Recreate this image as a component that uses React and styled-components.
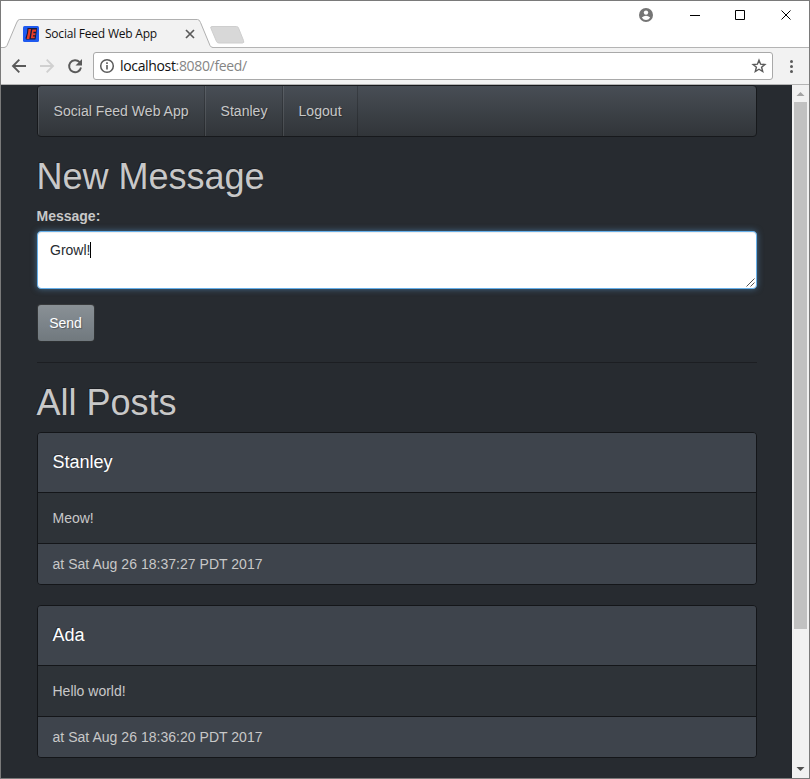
import React from "react";
import styled, { createGlobalStyle } from "styled-components";

const Global = createGlobalStyle`
  * { box-sizing: border-box; }
  html, body { margin: 0; padding: 0; overflow: hidden; }
`;

const Window = styled.div`
  width: 810px;
  height: 779px;
  display: flex;
  flex-direction: column;
  border: 1px solid #7a7a7a;
  background: #fff;
  overflow: hidden;
`;

const TitleBar = styled.div`
  position: relative;
  height: 47px;
  flex: none;
  display: flex;
  justify-content: space-between;
  border-bottom: 1px solid #b4b4b4;
`;

const TabShapes = styled.svg`
  position: absolute;
  left: 0;
  top: 0;
`;

const TabContent = styled.div`
  position: relative;
  display: flex;
  align-items: center;
  width: 196px;
  height: 28px;
  margin-top: 19px;
  padding-left: 22px;
`;

const TabTitle = styled.span`
  flex: none;
  width: 140px;
  margin-left: 6px;
  font: 12px/16px "Open Sans", "Noto Sans", sans-serif;
  letter-spacing: ${(p) => p.$tracking};
  color: #111;
  white-space: nowrap;
`;

const WindowControls = styled.svg`
  margin-right: 11px;
`;

const Toolbar = styled.div`
  height: 37px;
  flex: none;
  display: flex;
  align-items: center;
  background: #f2f2f2;
  border-bottom: 1px solid #b4b4b4;
`;

const NavIcons = styled.svg`
  flex: none;
`;

const AddressBar = styled.div`
  width: 680px;
  height: 28px;
  display: flex;
  align-items: center;
  padding: 0 5px;
  background: #fff;
  border: 1px solid #a9a9a9;
  border-radius: 3px;
`;

const Url = styled.span`
  flex: 1;
  margin-left: 5px;
  font: 14px/20px "Open Sans", "Noto Sans", sans-serif;
  letter-spacing: -0.34px;
  color: #858585;
  white-space: nowrap;
`;

const Host = styled.span`
  color: #111;
`;

const Viewport = styled.div`
  flex: 1;
  min-height: 0;
  display: flex;
`;

const Page = styled.main`
  flex: 1;
  padding: 0 35px 0 36px;
  overflow: hidden;
  background: #272b30;
  color: #c8c8c8;
  font: 14px/20px "Liberation Sans", Arial, sans-serif;
`;

const Navbar = styled.nav`
  display: flex;
  height: 52px;
  margin-bottom: 20px;
  border: 1px solid #17191c;
  border-radius: 4px;
  background: linear-gradient(#484e55, #3a3f44 60%, #313539);
  text-shadow: 1px 1px 1px rgba(0, 0, 0, 0.3);
  overflow: hidden;
`;

const NavItem = styled.a`
  width: ${(p) => p.$width}px;
  padding: 15px 0 0 14.5px;
  border-left: 1px solid rgba(255, 255, 255, 0.1);
  border-right: 1px solid rgba(0, 0, 0, 0.2);
  letter-spacing: 0.04px;
  white-space: nowrap;
`;

const Heading = styled.h1`
  margin: 0 0 9px -0.5px;
  font-size: 36px;
  font-weight: 400;
  line-height: 40px;
  text-shadow: -1px -1px 0 rgba(0, 0, 0, 0.3);
`;

const Label = styled.label`
  display: block;
  margin: 0 0 5px -0.5px;
  font-weight: 700;
`;

const MessageBox = styled.div`
  position: relative;
  height: 58px;
  padding: 8px 12px;
  background: #fff;
  color: #272b30;
  border: 1px solid #66afe9;
  border-radius: 4px;
  box-shadow: inset 0 1px 1px rgba(0, 0, 0, 0.075), 0 0 6px rgba(102, 175, 233, 0.5);
`;

const Caret = styled.span`
  display: inline-block;
  width: 1px;
  height: 16px;
  vertical-align: -3px;
  background: #000;
`;

const ResizeGrip = styled.svg`
  position: absolute;
  right: 1px;
  bottom: 1px;
`;

const SendButton = styled.button`
  display: block;
  width: 58px;
  height: 38px;
  margin: 15px 0 20px;
  padding: 0 1px 0 0;
  border: 1px solid rgba(0, 0, 0, 0.6);
  border-radius: 4px;
  background: linear-gradient(#8a9196, #7a8288 60%, #70787d);
  background-origin: border-box;
  color: #fff;
  font: inherit;
  text-shadow: 1px 1px 1px rgba(0, 0, 0, 0.3);
`;

const Divider = styled.hr`
  height: 1px;
  margin: 0 0 20px;
  border: 0;
  background: #1c1e22;
`;

const Panel = styled.article`
  height: 153px;
  margin-bottom: 20px;
  border: 1px solid #141619;
  border-radius: 4px;
  background: #2e3338;
  overflow: hidden;
`;

const PanelHeading = styled.h3`
  height: 60px;
  margin: 0;
  padding: 19px 14.5px 0;
  border-bottom: 1px solid #141619;
  background: #3e444c;
  color: #fff;
  font-size: 18px;
  font-weight: 400;
  line-height: 20px;
  text-shadow: -1px -1px 0 rgba(0, 0, 0, 0.3);
`;

const PanelBody = styled.div`
  height: 50px;
  padding: 15px 14.5px;
`;

const PanelFooter = styled.footer`
  height: 41px;
  padding: 10px 14.5px;
  border-top: 1px solid #141619;
  background: #3e444c;
  letter-spacing: 0.03px;
`;

const Scrollbar = styled.div`
  width: 17px;
  display: flex;
  flex-direction: column;
  align-items: center;
  background: #f1f1f1;
`;

const Thumb = styled.div`
  width: 13px;
  height: 527px;
  margin-bottom: auto;
  background: #c1c1c1;
`;

const posts = [
  { author: "Stanley", text: "Meow!", time: "at Sat Aug 26 18:37:27 PDT 2017" },
  { author: "Ada", text: "Hello world!", time: "at Sat Aug 26 18:36:20 PDT 2017" },
];

function Favicon() {
  return (
    <svg width="16" height="16" viewBox="0 0 16 16">
      <rect width="16" height="16" rx="1.500" fill="#1f5af0" />
      <path d="M4.500 2h9.500l-.5 5-1 6.500H3L2.500 12 4 7z" fill="#151a3c" />
      <path d="M5.500 3H8L6.300 13H3.500L5 7zM9.300 3.500h3.900l-.3 2.200H10.500l-.2 1.500h2.300l-.3 2h-2.200l-.2 1.300h2l-.3 1.800H7.800z" fill="#ea3d25" />
    </svg>
  );
}

function Chrome() {
  return (
    <>
      <TitleBar>
        <TabShapes width="260" height="47">
          <path d="M0 46.500h3q2 0 3-2l9.500-22.500q1.200-3.500 3-3.500h178q2 0 3 3l9.500 23q1 2 3 2V47H0z" fill="#f2f2f2" />
          <path d="M0 46.500h3q2 0 3-2l9.500-22.500q1.200-3.500 3-3.500h178q2 0 3 3l9.500 23q1 2 3 2" fill="none" stroke="#b0b0b0" />
          <path d="M5 46.500H210" stroke="#f2f2f2" />
          <path d="M211 25.500h24.500q1.500 0 2 1.500l5 12.500q1 2.500-1 2.500h-23.500q-1.800 0-2.500-1.500l-5.500-13q-1-2 1-2z" fill="#d8d8d8" stroke="#cecece" />
        </TabShapes>
        <TabContent>
          <Favicon />
          <TabTitle $tracking="-0.22px">Social Feed Web App</TabTitle>
          <svg width="10" height="10" viewBox="0 0 10 10">
            <path d="M1 1l8 8M9 1l-8 8" stroke="#5a5a5a" strokeWidth="1.700" />
          </svg>
        </TabContent>
        <WindowControls width="160" height="30" viewBox="638 1 160 30">
          <circle cx="646" cy="15" r="7" fill="#757575" />
          <circle cx="646" cy="12.600" r="2.200" fill="#fff" />
          <path d="M641.800 17.400q4.200-3.200 8.400 0q-1.600 2.500-4.200 2.500t-4.200-2.500z" fill="#fff" />
          <path d="M690 15.500h10M735.500 10.500h9v9h-9zM781.500 10.500l9 9M790.500 10.500l-9 9" fill="none" stroke="#000" />
        </WindowControls>
      </TitleBar>
      <Toolbar>
        <NavIcons width="92" height="36" viewBox="1 48 92 36">
          <path d="M26 66H13M19.300 59.700L13 66l6.300 6.300" fill="none" stroke="#5a5a5a" strokeWidth="1.900" />
          <path d="M40 66h13M46.700 59.700L53 66l-6.300 6.300" fill="none" stroke="#d0d0d0" strokeWidth="1.900" />
          <path d="M79.600 62.200A6 6 0 1 0 81 67.500" fill="none" stroke="#5a5a5a" strokeWidth="1.900" />
          <path d="M82 59v6.500h-6.500z" fill="#5a5a5a" />
        </NavIcons>
        <AddressBar>
          <svg width="16" height="16" viewBox="0 0 16 16">
            <circle cx="8" cy="8" r="6.300" fill="none" stroke="#5a5a5a" strokeWidth="1.500" />
            <path d="M8 7v4.500M8 4.300v1.700" stroke="#5a5a5a" strokeWidth="1.600" />
          </svg>
          <Url><Host>localhost</Host>:8080/feed/</Url>
          <svg width="16" height="16" viewBox="0 0 16 16">
            <path d="M8 2.200l1.600 4 4.300.3-3.300 2.800 1.100 4.200L8 11.200l-3.700 2.300 1.100-4.200-3.300-2.800 4.300-.3z" fill="none" stroke="#5a5a5a" strokeWidth="1.400" />
          </svg>
        </AddressBar>
        <NavIcons width="35" height="36" viewBox="773 48 35 36">
          <circle cx="791.500" cy="61.500" r="1.500" fill="#5a5a5a" />
          <circle cx="791.500" cy="66.500" r="1.500" fill="#5a5a5a" />
          <circle cx="791.500" cy="71.500" r="1.500" fill="#5a5a5a" />
        </NavIcons>
      </Toolbar>
    </>
  );
}

function Post({ author, text, time }) {
  return (
    <Panel>
      <PanelHeading>{author}</PanelHeading>
      <PanelBody>{text}</PanelBody>
      <PanelFooter>{time}</PanelFooter>
    </Panel>
  );
}

export default function App() {
  return (
    <Window>
      <Global />
      <Chrome />
      <Viewport>
        <Page>
          <Navbar>
            <NavItem $width={167}>Social Feed Web App</NavItem>
            <NavItem $width={78}>Stanley</NavItem>
            <NavItem $width={75}>Logout</NavItem>
          </Navbar>
          <Heading>New Message</Heading>
          <Label>Message:</Label>
          <MessageBox>
            Growl!<Caret />
            <ResizeGrip width="9" height="9" viewBox="0 0 9 9">
              <path d="M0.500 8.500l8-8M4.500 8.500l4-4" stroke="#555" />
            </ResizeGrip>
          </MessageBox>
          <SendButton>Send</SendButton>
          <Divider />
          <Heading>All Posts</Heading>
          {posts.map((p) => <Post key={p.author} {...p} />)}
        </Page>
        <Scrollbar>
          <svg width="17" height="17"><path d="M4.500 11h8l-4-4z" fill="#a3a3a3" /></svg>
          <Thumb />
          <svg width="17" height="17"><path d="M4.500 6h8l-4 4z" fill="#505050" /></svg>
        </Scrollbar>
      </Viewport>
    </Window>
  );
}
